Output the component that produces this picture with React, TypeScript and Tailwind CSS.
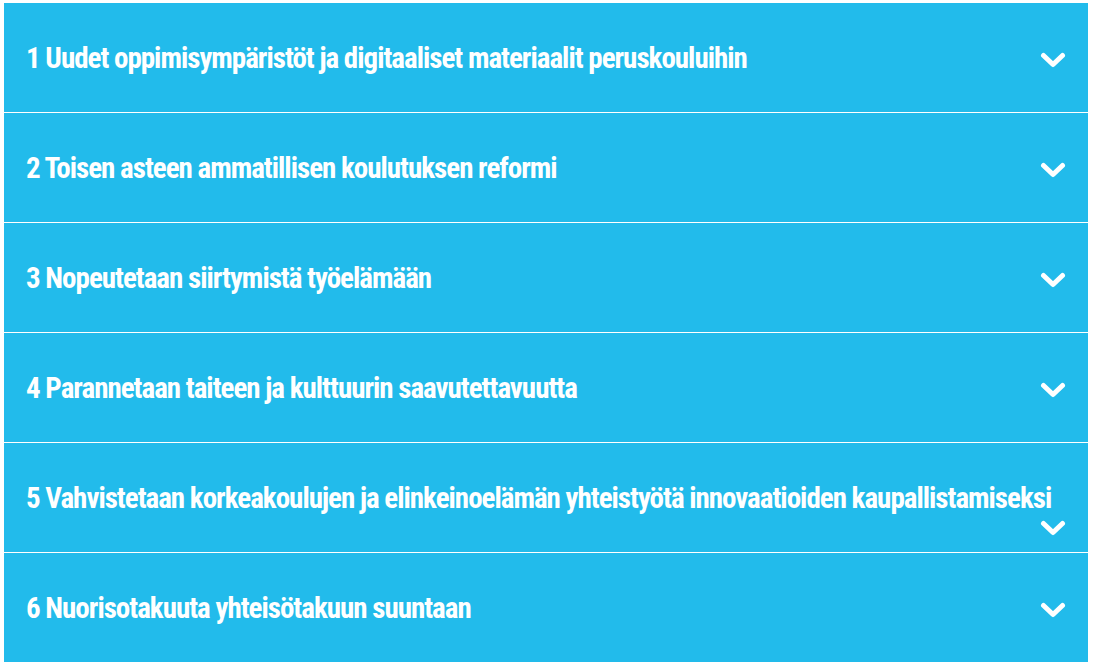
import React from "react";

type Item = { title: string; wrapChevron?: boolean };

const items: Item[] = [
  { title: "1 Uudet oppimisympäristöt ja digitaaliset materiaalit peruskouluihin" },
  { title: "2 Toisen asteen ammatillisen koulutuksen reformi" },
  { title: "3 Nopeutetaan siirtymistä työelämään" },
  { title: "4 Parannetaan taiteen ja kulttuurin saavutettavuutta" },
  {
    title: "5 Vahvistetaan korkeakoulujen ja elinkeinoelämän yhteistyötä innovaatioiden kaupallistamiseksi",
    wrapChevron: true,
  },
  { title: "6 Nuorisotakuuta yhteisötakuun suuntaan" },
];

function Chevron() {
  return (
    <svg width="26" height="16" viewBox="0 0 26 16" className="block shrink-0">
      <polyline
        points="3.5,3.5 13,12.5 22.5,3.5"
        fill="none"
        stroke="white"
        strokeWidth="5"
        strokeLinecap="round"
        strokeLinejoin="round"
      />
    </svg>
  );
}

function AccordionRow({ item }: { item: Item }) {
  const heading = (
    <h3 className="whitespace-nowrap text-white font-bold text-[29px] leading-[28px] tracking-[-1px] font-['Roboto_Condensed','Roboto',sans-serif]">
      {item.title}
    </h3>
  );
  return (
    <div className="h-[109px] bg-[#22bbeb] pl-[22px] pr-[22px] pt-[41px] overflow-hidden">
      {item.wrapChevron ? (
        <div>
          {heading}
          <div className="flex justify-end mt-[8px]">
            <Chevron />
          </div>
        </div>
      ) : (
        <div className="flex items-start justify-between">
          {heading}
          <div className="mt-[8px]">
            <Chevron />
          </div>
        </div>
      )}
    </div>
  );
}

export default function App() {
  return (
    <div className="bg-white w-[1093px] h-[666px] pt-[3px] pl-[4px]">
      <div className="w-[1084px] flex flex-col gap-px">
        {items.map((item) => (
          <AccordionRow key={item.title} item={item} />
        ))}
      </div>
    </div>
  );
}
